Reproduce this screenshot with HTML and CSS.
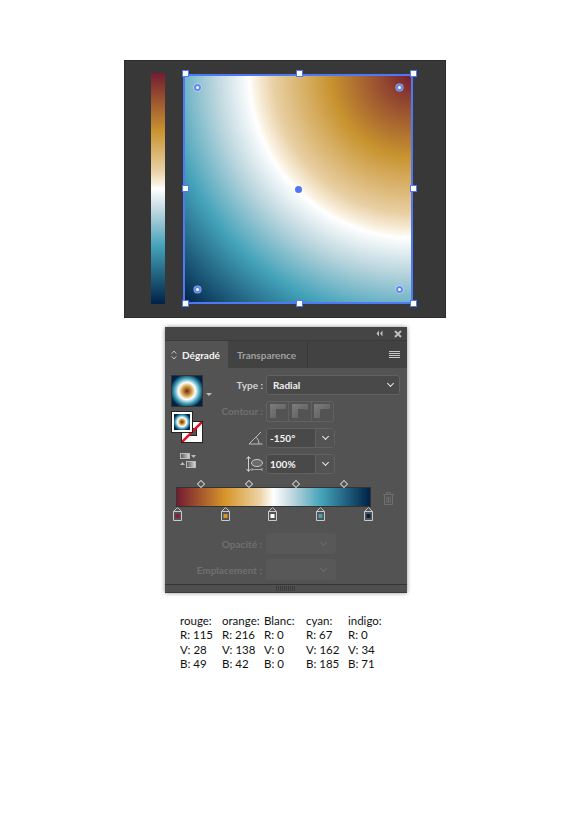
FILE: index.html
```html
<!DOCTYPE html>
<html lang="fr">
<head>
    <meta charset="UTF-8">
    <meta name="viewport" content="width=device-width, initial-scale=1.0">
    <title>Dégradé</title>
    <link rel="stylesheet" href="styles.css">
</head>
<body>

    <!-- Artboard -->
    <div class="artboard">
        <div class="ramp"></div>
        <div class="shape">
            <span class="handle h-tl"></span>
            <span class="handle h-tc"></span>
            <span class="handle h-tr"></span>
            <span class="handle h-ml"></span>
            <span class="handle h-mr"></span>
            <span class="handle h-bl"></span>
            <span class="handle h-bc"></span>
            <span class="handle h-br"></span>
            <span class="widget w-tl"></span>
            <span class="widget w-tr"></span>
            <span class="widget w-bl"></span>
            <span class="widget w-br"></span>
            <span class="center-dot"></span>
        </div>
    </div>

    <!-- Gradient panel -->
    <div class="panel">
        <div class="panel-top">
            <svg width="7" height="7" viewBox="0 0 7 7"><path d="M3 .5 .5 3.5 3 6.5zM6.500 .5 4 3.500 6.500 6.500z" fill="#bdbdbd"/></svg>
            <svg width="8" height="8" viewBox="0 0 8 8"><path d="M1 1 7 7M7 1 1 7" stroke="#bdbdbd" stroke-width="2"/></svg>
        </div>
        <div class="tabs">
            <div class="tab active">
                <svg width="6" height="10" viewBox="0 0 6 10"><path d="M.7 3.600 3 1l2.300 2.600M.7 6.400 3 9l2.300-2.600" fill="none" stroke="#c4c4c4"/></svg>
                Dégradé
            </div>
            <div class="tab">Transparence</div>
            <svg class="menu-icon" width="11" height="7" viewBox="0 0 11 7"><path d="M0 .5h11M0 2.500h11M0 4.500h11M0 6.500h11" stroke="#c8c8c8"/></svg>
        </div>

        <div class="settings">
            <div class="side">
                <div class="preview-row">
                    <div class="preview"></div>
                    <span class="small-arrow"></span>
                </div>
                <div class="fill-stroke">
                    <div class="stroke-box"><svg width="20" height="20" viewBox="0 0 20 20"><rect x="7.500" y="6.500" width="7" height="7" fill="#535353" stroke="#222"/><path d="M0 20 20 0" stroke="#e0121f" stroke-width="2.500"/></svg></div>
                    <div class="fill-box"></div>
                </div>
                <svg class="reverse-icon" width="16" height="15" viewBox="0 0 16 15">
                    <defs>
                        <linearGradient id="grey"><stop offset="0" stop-color="#555"/><stop offset="1" stop-color="#ddd"/></linearGradient>
                        <linearGradient id="corner-fill" x1="0" y1="0" x2="1" y2="1"><stop offset="0" stop-color="#7c7c7c"/><stop offset="1" stop-color="#5c5c5c"/></linearGradient>
                    </defs>
                    <rect x=".5" y=".5" width="9" height="5" fill="url(#grey)" stroke="#bbb"/>
                    <path d="M11 2h5l-2.500 3z" fill="#bbb"/>
                    <path d="M0 12h5L2.500 9z" fill="#bbb"/>
                    <rect x="6.500" y="8.500" width="9" height="6" fill="url(#grey)" stroke="#bbb"/>
                </svg>
            </div>

            <div class="fields">
                <label class="label">Type :</label>
                <div class="select wide">Radial<span class="chev"></span></div>

                <label class="label off">Contour :</label>
                <div class="corners">
                    <div class="corner"><svg width="16" height="14" viewBox="0 0 16 14"><path d="M0 0h16v5H6v9H0z" fill="url(#corner-fill)"/></svg></div>
                    <div class="corner"><svg width="16" height="14" viewBox="0 0 16 14"><path d="M0 0h16v6l-5-1H6v9H0z" fill="url(#corner-fill)"/></svg></div>
                    <div class="corner"><svg width="16" height="14" viewBox="0 0 16 14"><path d="M0 0h16v5H8Q6 5 6 7v7H0z" fill="url(#corner-fill)"/></svg></div>
                </div>

                <svg class="field-icon" width="15" height="14" viewBox="0 0 15 14"><path d="M13 1 1 13h13.500M8.500 6.500Q11 9 11 13" fill="none" stroke="#bdbdbd"/></svg>
                <div class="combo"><span class="value">-150°</span><span class="combo-btn"><span class="chev"></span></span></div>

                <svg class="field-icon" width="17" height="16" viewBox="0 0 17 16"><path d="M2.500 1v14M.5 3l2-2.500 2 2.500M.5 13l2 2.500 2-2.500" fill="none" stroke="#d0d0d0"/><ellipse cx="11" cy="7" rx="5.500" ry="3.500" fill="#6a6a6a" stroke="#c8c8c8"/><path d="M6 13.500h10M6 12v3M16 12v3" fill="none" stroke="#aaa"/></svg>
                <div class="combo"><span class="value">100%</span><span class="combo-btn"><span class="chev"></span></span></div>
            </div>
        </div>

        <div class="slider">
            <div class="track"></div>
            <span class="diamond d1"></span>
            <span class="diamond d2"></span>
            <span class="diamond d3"></span>
            <span class="diamond d4"></span>
            <svg class="stop s1" width="9" height="14" viewBox="0 0 9 14"><path d="M.5 13.500v-9l4-4 4 4v9zM.5 4.500h8" fill="none"/><rect class="c-red" x="2.500" y="7" width="4" height="4"/></svg>
            <svg class="stop s2" width="9" height="14" viewBox="0 0 9 14"><path d="M.5 13.500v-9l4-4 4 4v9zM.5 4.500h8" fill="none"/><rect class="c-orange" x="2.500" y="7" width="4" height="4"/></svg>
            <svg class="stop s3" width="9" height="14" viewBox="0 0 9 14"><path d="M.5 13.500v-9l4-4 4 4v9zM.5 4.500h8" fill="none"/><rect class="c-white" x="2.500" y="7" width="4" height="4"/></svg>
            <svg class="stop s4" width="9" height="14" viewBox="0 0 9 14"><path d="M.5 13.500v-9l4-4 4 4v9zM.5 4.500h8" fill="none"/><rect class="c-cyan" x="2.500" y="7" width="4" height="4"/></svg>
            <svg class="stop s5" width="9" height="14" viewBox="0 0 9 14"><path d="M.5 13.500v-9l4-4 4 4v9zM.5 4.500h8" fill="none"/><rect class="c-indigo" x="2.500" y="7" width="4" height="4"/></svg>
            <svg class="trash" width="11" height="13" viewBox="0 0 11 13"><path d="M0 2.500h11M3.500 2.500V.5h4v2M1.500 2.500v10h8v-10M3.800 4.500v6.500M5.500 4.500v6.500M7.200 4.500v6.500" fill="none" stroke="#6f6f6f"/></svg>
        </div>

        <div class="disabled-rows">
            <div class="row">
                <label class="label off">Opacité :</label>
                <div class="select dim"><span class="chev off"></span></div>
            </div>
            <div class="row">
                <label class="label off">Emplacement :</label>
                <div class="select dim"><span class="chev off"></span></div>
            </div>
        </div>

        <div class="panel-foot"><span class="grip"></span></div>
    </div>

    <!-- Colour values -->
    <div class="legend">
        <div>rouge:<br>R: 115<br>V: 28<br>B: 49</div>
        <div>orange:<br>R: 216<br>V: 138<br>B: 42</div>
        <div>Blanc:<br>R: 0<br>V: 0<br>B: 0</div>
        <div>cyan:<br>R: 67<br>V: 162<br>B: 185</div>
        <div>indigo:<br>R: 0<br>V: 34<br>B: 71</div>
    </div>

</body>
</html>
```

FILE: styles.css
```css
body {
    margin: 0;
    background: #fff;
    font-family: Lato, Arial, sans-serif;
}

/* Artboard */
.artboard {
    box-sizing: border-box;
    width: 322px;
    height: 258px;
    margin: 60px 0 0 124px;
    padding: 13px 0 0 26px;
    background: #383838;
    border: 1px solid #2b2b2b;
    display: flex;
    gap: 18px;
}

.ramp {
    width: 14px;
    height: 231px;
    margin-top: -1px;
    background: linear-gradient(to bottom, #731c31 0%, #c8932f 25%, #e8cfa3 42%, #fbf3e4 48.5%, #fff 50%, #bcd6de 60%, #43a2b9 75%, #002247 100%);
}

.shape {
    position: relative;
    box-sizing: border-box;
    width: 230px;
    height: 230px;
    border: 2px solid #4f78f5;
    background: radial-gradient(circle 324px at 100% 0, #731c31 0%, #c8932f 25.5%, #e8cfa3 43%, #fbf3e4 49%, #fff 50.500%, #bcd6de 61%, #43a2b9 76%, #002247 100%);
    background-origin: border-box;
}

.handle {
    position: absolute;
    width: 5px;
    height: 5px;
    background: #fff;
    border: 1px solid #4f78f5;
}

.h-tl { left: -3px; top: -6px; }
.h-tc { left: 111px; top: -6px; }
.h-tr { right: -6px; top: -6px; }
.h-ml { left: -3px; top: 109px; }
.h-mr { right: -6px; top: 109px; }
.h-bl { left: -3px; bottom: -5px; }
.h-bc { left: 111px; bottom: -5px; }
.h-br { right: -6px; bottom: -5px; }

.widget {
    position: absolute;
    width: 3px;
    height: 3px;
    background: #fff;
    border: 2px solid #5f86f7;
    border-radius: 50%;
    box-shadow: 0 0 0 0.5px rgba(255, 255, 255, 0.6);
}

.w-tl { left: 9px; top: 8px; }
.w-tr { right: 8px; top: 8px; }
.w-bl { left: 9px; bottom: 9px; }
.w-br { right: 8px; bottom: 9px; }

.center-dot {
    position: absolute;
    left: 110px;
    top: 110px;
    width: 7px;
    height: 7px;
    background: #4f78f5;
    border-radius: 50%;
}

/* Panel */
.panel {
    box-sizing: border-box;
    width: 242px;
    height: 266px;
    margin: 9px 0 0 165px;
    background: #535353;
    border-radius: 2px 2px 0 0;
    box-shadow: 0 0 4px rgba(0, 0, 0, 0.45);
    display: flex;
    flex-direction: column;
    color: #e4e4e4;
    font-size: 10px;
    font-weight: 700;
}

.panel-top {
    height: 13px;
    background: #454545;
    border-bottom: 1px solid #3a3a3a;
    display: flex;
    justify-content: flex-end;
    align-items: center;
    gap: 11px;
    padding-right: 5px;
}

.tabs {
    height: 27px;
    background: #424242;
    display: flex;
    align-items: stretch;
    position: relative;
}

.tab {
    box-sizing: border-box;
    width: 80px;
    padding-left: 9px;
    display: flex;
    align-items: center;
    color: #a0a0a0;
    border-right: 1px solid #383838;
    white-space: nowrap;
}

.tab.active {
    width: 63px;
    padding-left: 6px;
    gap: 5px;
    background: #535353;
    color: #f2f2f2;
    border-right: 0;
}

.menu-icon {
    position: absolute;
    right: 7px;
    top: 10px;
}

/* Settings area */
.settings {
    display: flex;
    padding-top: 7px;
}

.side {
    box-sizing: border-box;
    width: 36px;
    padding-left: 6px;
}

.preview-row {
    display: flex;
    align-items: center;
    gap: 3px;
}

.preview {
    box-sizing: border-box;
    width: 32px;
    height: 32px;
    flex-shrink: 0;
    border: 1px solid #333;
    background: radial-gradient(circle 17px at 50% 50%, #731c31 0%, #c8932f 25%, #fff 50%, #43a2b9 75%, #002247 100%);
}

.small-arrow {
    flex-shrink: 0;
    width: 0;
    height: 0;
    margin-top: 6px;
    border-left: 3px solid transparent;
    border-right: 3px solid transparent;
    border-top: 3px solid #bdbdbd;
}

.fill-stroke {
    position: relative;
    width: 30px;
    height: 30px;
    margin: 5px 0 0 1px;
}

.fill-box {
    position: absolute;
    left: 0;
    top: 0;
    box-sizing: border-box;
    width: 20px;
    height: 20px;
    border: 2px solid #fff;
    outline: 1px solid #222;
    background: radial-gradient(circle 9px at 50% 50%, #731c31 0%, #c8932f 25%, #fff 50%, #43a2b9 75%, #002247 100%);
}

.stroke-box {
    position: absolute;
    left: 10px;
    top: 10px;
    width: 20px;
    height: 20px;
    background: #fff;
    outline: 1px solid #222;
    overflow: hidden;
}

.reverse-icon {
    display: block;
    margin: 11px 0 0 9px;
}

.fields {
    display: grid;
    grid-template-columns: 62px 134px;
    grid-auto-rows: 20px;
    column-gap: 3px;
    row-gap: 6.4px;
    align-items: center;
}

.label {
    color: #d4d4d4;
    text-align: right;
    white-space: nowrap;
}

.label.off {
    color: #707070;
}

.select {
    box-sizing: border-box;
    height: 20px;
    display: flex;
    align-items: center;
    justify-content: space-between;
    padding: 0 6px;
    border: 1px solid #616161;
    border-radius: 3px;
    background: #494949;
    color: #f0f0f0;
}

.chev {
    width: 4px;
    height: 4px;
    margin-top: -3px;
    border-right: 1.5px solid #e8e8e8;
    border-bottom: 1.5px solid #e8e8e8;
    transform: rotate(45deg);
}

.chev.off {
    border-color: #6b6b6b;
}

.corners {
    display: flex;
    box-sizing: border-box;
    width: 68px;
    height: 21px;
    border: 1px solid #616161;
    border-radius: 2px;
}

.corner {
    flex: 1;
    display: flex;
    align-items: center;
    justify-content: center;
    border-right: 1px solid #616161;
}

.corner:last-child {
    border-right: 0;
}

.combo {
    box-sizing: border-box;
    width: 69px;
    height: 20px;
    display: flex;
    border: 1px solid #616161;
    border-radius: 3px;
    background: #494949;
    color: #f4f4f4;
}

.value {
    flex: 1;
    padding-left: 3px;
    line-height: 18px;
}

.combo-btn {
    width: 18px;
    display: flex;
    align-items: center;
    justify-content: center;
    border-left: 1px solid #616161;
    background: #535353;
}

.field-icon {
    justify-self: end;
}

/* Gradient slider */
.slider {
    position: relative;
    height: 48px;
    margin-top: 6px;
}

.track {
    position: absolute;
    left: 11px;
    top: 7px;
    box-sizing: border-box;
    width: 195px;
    height: 20px;
    border: 1px solid #333;
    background: linear-gradient(to right, #731c31 0%, #d8952a 25%, #ecd3a6 43%, #fff 50%, #bcd6de 60%, #43a2b9 75%, #002247 100%);
}

.diamond {
    position: absolute;
    top: 1px;
    width: 4px;
    height: 4px;
    border: 1px solid #c9c9c9;
    transform: rotate(45deg);
}

.d1 { left: 33px; }
.d2 { left: 81px; }
.d3 { left: 128px; }
.d4 { left: 176px; }

.stop {
    position: absolute;
    top: 27px;
    stroke: #c9c9c9;
}

.stop rect {
    stroke: none;
}

.s1 { left: 8px; }
.s2 { left: 56px; }
.s3 { left: 103px; }
.s4 { left: 151px; }
.s5 { left: 199px; }

.c-red { fill: #8b1c36; }
.c-orange { fill: #d8952a; }
.c-white { fill: #fff; }
.c-cyan { fill: #43a2b9; }
.c-indigo { fill: #002247; }

.trash {
    position: absolute;
    left: 218px;
    top: 12px;
}

/* Disabled rows */
.disabled-rows {
    display: flex;
    flex-direction: column;
    gap: 5px;
    margin-top: 5px;
}

.row {
    width: 171px;
    height: 21px;
    display: flex;
    align-items: center;
    justify-content: flex-end;
    gap: 4px;
}

.select.dim {
    width: 70px;
    height: 21px;
    border: 0;
    background: #585858;
    justify-content: flex-end;
    padding-right: 10px;
}

.panel-foot {
    margin-top: auto;
    height: 7px;
    background: #4f4f4f;
    border-top: 1px solid #353535;
    border-bottom: 1px solid #3c3c3c;
    display: flex;
    justify-content: center;
}

.grip {
    width: 20px;
    height: 5px;
    margin-top: 1px;
    background: repeating-linear-gradient(to right, #3a3a3a 0, #3a3a3a 1px, transparent 1px, transparent 2px);
}

/* Legend */
.legend {
    display: grid;
    grid-template-columns: repeat(5, 42px);
    margin: 21px 0 0 180px;
    font-size: 11.5px;
    line-height: 14.3px;
    color: #111;
    white-space: nowrap;
}
```
